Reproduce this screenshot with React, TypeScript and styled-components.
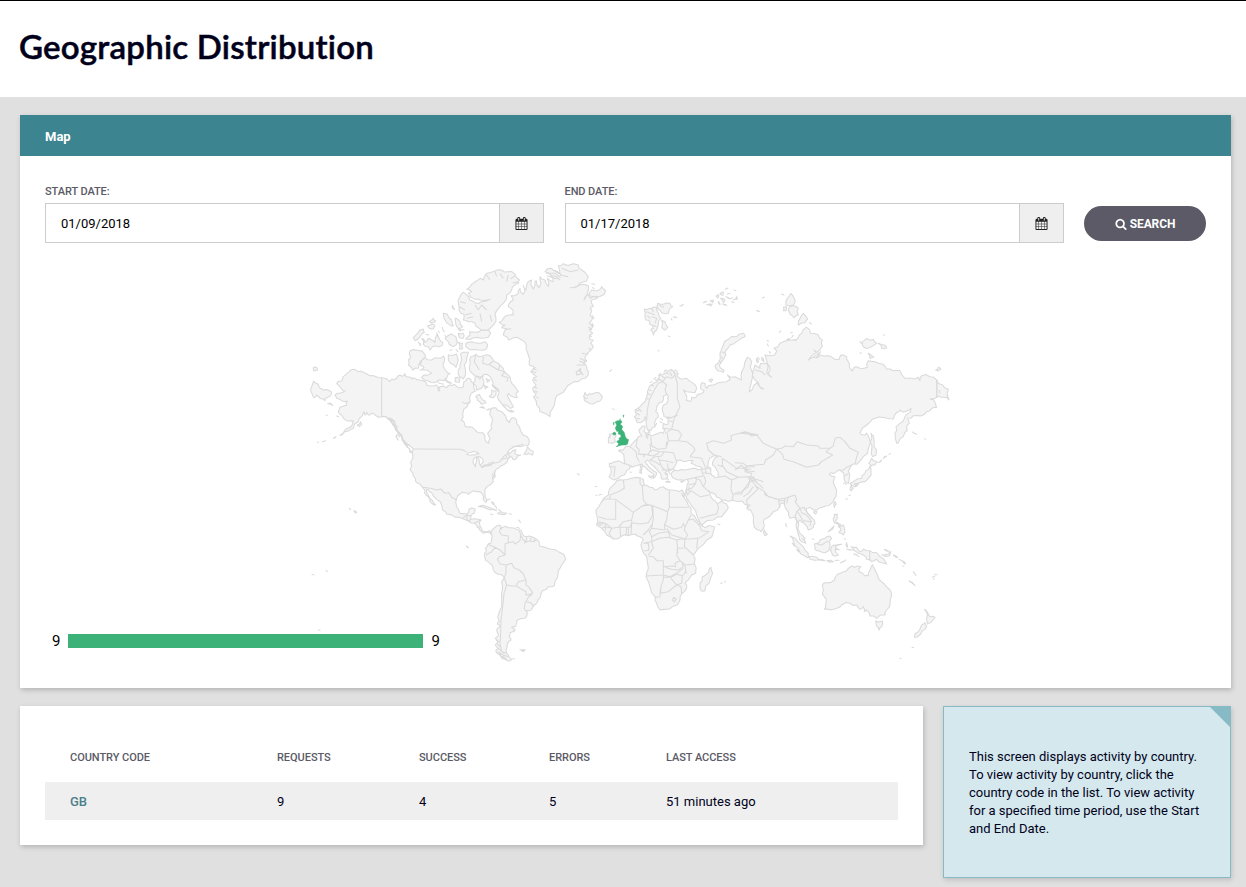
import React from 'react';
import styled, { createGlobalStyle, css } from 'styled-components';

const GlobalStyle = createGlobalStyle`
  * { box-sizing: border-box; }
  body {
    margin: 0;
    background: #e0e0e0;
    color: #00001a;
    font-family: Roboto, 'Liberation Sans', sans-serif;
    font-size: 13px;
  }
`;

const Page = styled.div`
  min-height: 887px;
  overflow: hidden;
`;

const PageHeader = styled.header`
  height: 97px;
  border-top: 1px solid #000;
  background: #fff;
  padding: 25px 19px 0;
`;

const Title = styled.h1`
  margin: 0;
  font-family: Lato, 'Liberation Sans', sans-serif;
  font-weight: 600;
  font-size: 33px;
  line-height: 40px;
  letter-spacing: 0.23px;
  white-space: nowrap;
  -webkit-text-stroke: 0.5px #00001a;
`;

const Content = styled.main`
  padding: 18px 15px 9px 20px;
  display: flex;
  flex-direction: column;
  gap: 18px;
`;

const panel = css`
  background: #fff;
  box-shadow: 1px 2px 5px rgba(0, 0, 0, 0.2);
`;

const MapPanel = styled.section`
  ${panel}
`;

const PanelHeader = styled.h2`
  margin: 0;
  height: 41px;
  line-height: 43px;
  padding: 0 25px;
  background: #3b8490;
  color: #fff;
  font-size: 13px;
  font-weight: 700;
`;

const PanelBody = styled.div`
  padding: 29px 25px 20px;
`;

const Filters = styled.form`
  display: grid;
  grid-template-columns: 499px 499px 122px;
  justify-content: space-between;
  align-items: end;
`;

const Field = styled.label`
  display: flex;
  flex-direction: column;
  gap: 4px;
`;

const FieldLabel = styled.span`
  color: #5b5a66;
  font-size: 11px;
  font-weight: 500;
  line-height: 14px;
  letter-spacing: -0.08px;
`;

const DateBox = styled.span`
  display: flex;
  height: 40px;
  border: 1px solid #ccc;
`;

const DateInput = styled.input`
  flex: 1;
  min-width: 0;
  border: 0;
  outline: 0;
  padding: 0 15px;
  background: #fff;
  color: #000;
  font: 13px Roboto, 'Liberation Sans', sans-serif;
`;

const CalendarButton = styled.span`
  width: 44px;
  display: flex;
  align-items: center;
  justify-content: center;
  border-left: 1px solid #ccc;
  background: #efefef;
  color: #222;
`;

const SearchButton = styled.button`
  height: 35px;
  margin: 0 0 2px;
  padding: 0;
  display: flex;
  align-items: center;
  justify-content: center;
  gap: 3px;
  border: 0;
  border-radius: 18px;
  background: #5b5a66;
  color: #fff;
  font: 700 12px Roboto, 'Liberation Sans', sans-serif;
  letter-spacing: -0.1px;
`;

const MapFrame = styled.div`
  position: relative;
  margin-top: 12px;
  height: 413px;
`;

const MapSvg = styled.svg`
  display: block;
  width: 100%;
  height: 100%;
`;

const Legend = styled.div`
  position: absolute;
  left: 7px;
  bottom: 18px;
  display: flex;
  align-items: center;
  gap: 8px;
  color: #000;
  font-size: 15px;
  line-height: 18px;
`;

const LegendBar = styled.div`
  width: 355px;
  height: 14px;
  background: #3cb178;
`;

const BottomRow = styled.div`
  display: grid;
  grid-template-columns: 903px 1fr;
  gap: 20px;
  align-items: start;
`;

const TablePanel = styled.section`
  ${panel}
  padding: 25px;
  height: 139px;
`;

const Table = styled.table`
  width: 100%;
  table-layout: fixed;
  border-collapse: collapse;
`;

const HeadCell = styled.th<{ $width?: number }>`
  width: ${p => (p.$width ? p.$width + 'px' : 'auto')};
  height: 51px;
  padding: 2px 0 0 25px;
  text-align: left;
  font-size: 11px;
  font-weight: 500;
  letter-spacing: -0.05px;
  color: #5b5a66;
`;

const Cell = styled.td<{ $link?: boolean }>`
  height: 38px;
  padding: 0 0 0 25px;
  background: #efefef;
  color: ${p => (p.$link ? '#4b7f8c' : '#00001a')};
  font-weight: ${p => (p.$link ? 500 : 400)};
`;

const InfoPanel = styled.aside`
  position: relative;
  height: 172px;
  padding: 41px 25px 0;
  border: 1px solid #86bac5;
  background: #d5e8ed;
  box-shadow: 1px 2px 5px rgba(0, 0, 0, 0.15);
  line-height: 18px;

  &::after {
    content: '';
    position: absolute;
    top: -1px;
    right: -1px;
    border-top: 22px solid #86bac5;
    border-left: 22px solid transparent;
  }
`;

const CALENDAR =
  'M192 1664h288v-288h-288v288zm352 0h320v-288h-320v288zm-352-352h288v-320h-288v320zm352 0h320v-320h-320v320zm-352-384h288v-288h-288v288zm736 736h320v-288h-320v288zm-384-736h320v-288h-320v288zm768 736h288v-288h-288v288zm-384-352h320v-320h-320v320zm-352-864v-288q0-13-9.5-22.5t-22.5-9.5h-64q-13 0-22.5 9.5t-9.5 22.5v288q0 13 9.5 22.5t22.5 9.5h64q13 0 22.5-9.5t9.5-22.5zm736 864h288v-320h-288v320zm-384-384h320v-288h-320v288zm384 0h288v-288h-288v288zm32-480v-288q0-13-9.5-22.5t-22.5-9.5h-64q-13 0-22.5 9.5t-9.5 22.5v288q0 13 9.5 22.5t22.5 9.5h64q13 0 22.5-9.5t9.5-22.5zm384-64v1280q0 52-38 90t-90 38h-1408q-52 0-90-38t-38-90v-1280q0-52 38-90t90-38h128v-96q0-66 47-113t113-47h64q66 0 113 47t47 113v96h384v-96q0-66 47-113t113-47h64q66 0 113 47t47 113v96h128q52 0 90 38t38 90z';
const MAGNIFIER =
  'M1216 832q0-185-131.5-316.5t-316.5-131.5-316.5 131.5-131.5 316.5 131.5 316.5 316.5 131.5 316.5-131.5 131.5-316.5zm512 832q0 52-38 90t-90 38q-54 0-90-38l-343-342q-179 124-399 124-143 0-273.5-55.5t-225-150-150-225-55.5-273.5 55.5-273.5 150-225 225-150 273.5-55.5 273.5 55.5 225 150 150 225 55.5 273.5q0 220-124 399l343 343q37 37 37 90z';

const Icon = ({ d, size }: { d: string; size: number }) => (
  <svg width={size} height={size} viewBox="0 0 1792 1792" fill="currentColor" aria-hidden>
    <path d={d} />
  </svg>
);

/* Map sheets: each has its own origin and is drawn at three units per pixel.
   Shapes are "x,y x,y ..." point lists, separated by "|". */
type Sheet = { x: number; y: number; land: string; water?: string; borders?: string; highlight?: string };

const sheets: Sheet[] = [
  {
    // North American mainland, Alaska and the western Arctic islands
    x: 300,
    y: 255,
    land:
      '163,343 175,350 190,352 210,362 225,364 245,368 270,380 275,372 290,370 300,360 310,363 315,356 320,366 333,367 335,372 345,370 350,374 362,376 375,380 380,390 395,393 410,390 415,408 420,395 440,398 450,390 463,388 475,398 490,395 492,380 500,372 512,372 520,385 522,400 526,408 508,430 510,443 502,455 488,478 484,495 495,513 510,515 525,525 548,533 555,555 567,565 570,550 563,535 575,520 577,500 570,480 575,460 588,458 600,468 610,475 620,495 628,503 637,488 645,490 650,505 660,520 665,533 682,545 688,560 685,570 670,572 650,574 636,580 622,592 632,594 648,584 645,596 662,600 648,612 638,612 632,604 625,610 610,630 595,640 585,650 578,665 580,680 570,690 555,703 555,720 560,733 558,742 550,733 545,715 530,710 510,713 505,718 495,713 480,717 470,730 470,755 480,775 500,777 507,763 525,762 522,775 513,783 513,793 535,793 543,795 540,813 545,823 555,830 568,827 573,832 573,838 562,832 550,835 540,827 532,817 522,805 505,798 485,790 465,787 440,777 428,765 425,750 410,733 395,713 385,705 380,702 385,720 398,737 407,750 398,747 388,730 378,720 375,705 368,697 360,687 347,680 340,663 330,645 332,620 338,595 340,582 328,572 315,560 305,540 290,525 285,505 275,495 258,485 245,485 225,480 215,475 205,480 200,472 195,480 192,470 185,485 175,500 160,520 145,528 130,533 150,517 160,498 145,498 130,490 125,480 115,470 120,457 140,450 142,438 125,437 110,430 105,420 120,415 135,408 125,402 110,385 125,378 130,365 148,350' +
      '|41,378 55,388 60,400 70,405 88,407 95,415 80,428 75,437 60,430 50,420 41,428|83,446 98,452 90,444|40,338 50,337 53,345 42,348' +
      '|330,288 352,286 377,302 362,318 355,340 338,345 325,330 325,315 332,305' +
      '|375,308 395,315 420,310 430,303 433,320 430,335 440,350 450,355 440,370 432,378 415,375 400,383 385,378 365,368 372,360 395,355 360,345 372,338 360,330 365,318' +
      '|340,248 355,232 370,222 373,232 360,245 345,257|365,250 375,262 385,250 395,255 405,262 410,240 420,255 428,262 425,272 405,272 390,285 385,275 370,268' +
      '|388,200 400,190 407,198 395,203|382,213 395,207 405,213 400,222 388,220|430,175 442,178 455,195 460,212 447,208 435,195|465,190 480,200 488,215 478,222 468,210' +
      '|457,152 463,163 459,160|427,217 433,230 429,225|435,250 448,240 455,237 468,245 472,262 460,275 448,268|475,235 490,235 490,250 478,248|475,262 488,265 488,280 478,282' +
      '|445,300 470,297 475,315 468,337 452,325|482,295 505,292 500,310 493,330 497,355 490,372 478,365 475,345 480,330|465,368 480,370 478,382 465,380|435,370 455,385 440,380' +
      '|355,262 362,268 360,272|378,238 386,240|410,234 414,242|435,242 440,246|450,286 456,284|468,284 474,290|415,228 418,232|446,262 452,270|475,222 492,224 480,228' +
      '|172,510 182,500 185,508 178,515|120,540 130,533 124,541|100,550 108,545|68,560 76,557|52,562 56,561|79,480 82,482|110,483 116,485' +
      '|318,573 328,580 338,594 330,592|268,488 276,502 272,500|270,490 284,500 280,512|276,505 292,515 286,522|285,515 292,530 287,526|290,540 295,556 288,545|294,530 304,540 298,545|305,545 312,560 306,556|310,560 322,572 314,568|682,575 700,590 698,600 685,595 672,597 680,585' +
      '|148,760 152,764|162,766 170,772 166,774|500,873 504,878|36,958 42,960|78,946 82,950|832,656 838,660|56,1124 60,1126',
    borders: '245,368 245,485 258,485 275,500 290,525 300,535 312,562 328,572|340,582 482,583 500,590|412,378 418,385 432,388|486,442 500,446 508,440|415,395 420,410',
  },
  {
    // Greenland, Iceland, Ellesmere and Baffin
    x: 440,
    y: 255,
    land:
      '80,103 95,88 105,80 120,70 130,75 140,55 165,48 185,45 205,50 225,58 238,75 235,85 222,92 215,105 200,120 190,145 175,160 165,175 168,190 160,210 148,222 130,225 115,218 105,205 85,200 70,195 72,178 57,165 55,145 60,125 70,112 78,118 90,135 105,143 125,140 150,133 120,135 105,133 90,125 85,115 95,110' +
      '|77,252 90,240 88,230 110,232 125,226 145,225 152,235 145,247 125,250 100,248|78,265 95,260 115,265 135,260 143,270 138,283 115,285 90,284 80,278' +
      '|90,320 92,305 108,298 120,305 130,302 150,302 160,315 175,325 190,340 205,360 212,378 225,395 235,410 228,418 232,428 218,425 205,415 202,422 212,440 220,455 210,460 195,450 180,440 172,425 178,410 165,400 158,380 150,365 135,358 125,365 105,362 92,350 88,335' +
      '|105,365 120,372 130,362 132,380 125,400 110,405 100,385|107,425 118,418 128,435 138,443 125,448 112,435|148,425 155,405 168,408 160,428|120,457 135,460 128,455|140,465 152,462|188,452 205,468 222,470 200,462|138,370 150,375 142,382|132,390 144,396 136,402|156,390 176,405 164,400' +
      '|178,202 190,190 208,180 220,180 220,168 205,155 208,145 220,135 213,122 235,115 240,100 250,118 250,92 258,105 262,84 275,75 280,102 285,78 290,78 297,98 303,85 300,65 315,75 325,95 322,70 340,80 330,58 315,50 335,40 350,48 360,55 355,32 370,26 400,26 415,30 425,45 445,65 440,78 420,85 390,98 410,95 432,88 445,92 442,115 432,135 445,118 450,130 478,125 455,135 455,145 460,155 450,160 455,165 450,180 458,190 448,205 458,215 448,222 458,235 448,250 460,255 452,265 460,275 448,290 440,300 435,308 440,318 430,325 440,335 445,350 435,370 415,380 390,388 378,400 370,412 350,422 345,440 335,465 330,485 320,478 300,470 290,450 280,425 288,415 278,400 288,390 278,375 290,365 272,350 285,338 268,330 270,310 265,300 258,280 255,262 240,252 220,248 205,255 200,245 190,240 195,225 213,222 185,218 195,210' +
      '|448,122 455,105 470,107 485,95 497,107 478,125|430,425 435,412 442,422 448,416 455,418 475,412 487,425 480,438 460,447 440,440 432,432 442,430|456,86 464,88|458,97 462,101|458,182 462,190|456,205 461,213|506,548 510,540|36,152 43,163' +
      '|408,350 422,340 425,355 410,360',
    borders:
      '105,150 115,165 125,150 140,165|120,175 125,200|150,180 155,200|180,55 190,70|140,60 150,75|205,60 200,80|60,140 78,145|58,155 75,165|75,180 95,175|80,190 100,185|225,62 212,72|236,80 218,84|165,50 170,64|107,300 103,320 118,345|130,305 128,325 145,330 160,318|150,330 175,345 180,330|175,345 195,350 185,362 205,368 200,380|330,60 350,65 360,75|340,45 365,60|318,55 345,55 362,68|320,62 352,72|365,40 390,50 415,45|385,65 360,60|278,340 290,345|275,348 288,354|282,372 290,378|280,395 292,400|284,408 294,412|288,425 296,430|420,310 440,320|410,330 435,330|415,345 430,360|425,295 445,298|418,318 432,324|445,215 456,225|448,240 455,246|445,280 455,284',
  },
  {
    // South America, the Caribbean and the Great Lakes
    x: 400,
    y: 440,
    land:
      '273,280 285,262 300,256 303,268 312,260 325,263 345,265 362,270 368,282 380,290 395,290 410,298 418,318 435,322 455,328 475,335 493,345 497,357 485,375 475,392 473,412 463,437 445,440 428,452 422,470 410,490 395,508 385,512 375,510 382,522 375,535 352,540 350,550 345,560 335,562 345,568 330,578 328,590 333,600 322,612 318,630 325,645 335,658 325,663 305,655 292,640 288,630 295,625 286,615 294,605 286,595 296,585 290,570 300,560 292,552 298,545 298,515 305,480 308,440 313,412 295,403 280,390 268,368 253,345 258,335 256,325 263,315 272,310 275,295' +
      '|235,200 250,196 270,203 290,212 270,210 250,202|293,220 302,214 320,219 312,224 297,222|327,221 334,223|272,222 279,224|262,180 270,177|275,185 283,195|285,198 290,206|350,262 358,265|341,575 345,572|360,628 366,633|367,628 376,629 370,635|338,656 344,657|356,240 361,248|296,208 300,212|200,320 205,323',
    water: '200,43 215,37 225,35 237,42 225,45 213,46|222,55 230,50 230,65 226,80 221,72|232,50 242,52 250,60 247,70 240,75 238,62|245,82 255,76 262,78 280,66 270,68 255,74',
    borders:
      '240,75 246,82 280,70 300,65 312,48 325,40 330,55|68,142 92,145 110,150 122,147 135,160 147,158 155,172 170,180|188,235 200,225 213,228|202,225 200,238 205,243|213,238 205,243|222,250 243,240|232,262 242,260|303,262 298,275 305,285 325,288 325,308 315,312 315,345|263,313 285,322 275,335 258,345|285,322 300,330 315,345 298,350 292,358 300,372 318,375|318,375 335,370 342,383 358,390 370,402 378,420|318,375 318,400 313,412|313,412 320,435 335,438 348,438 355,425 378,420|350,438 365,448 378,455 378,465 390,463 398,458 385,440 378,435 378,420|390,463 375,490 373,508|398,458 390,470|380,485 392,488 402,500|320,435 312,460 308,500 303,540 302,580 300,610 305,635 320,640|325,308 340,305 345,312 360,302 362,285 358,272|362,285 370,300 380,308|380,292 378,305|395,290 390,303 378,305 372,310|403,295 402,305 390,303|410,298 402,305|292,635 310,645 325,650|290,610 300,620|292,622 302,632 312,640|298,640 304,650 316,655|308,648 320,658|288,600 298,606|282,95 286,108 280,118|277,100 282,112|318,45 322,58|300,60 318,55|335,22 352,18 370,12',
  },
  {
    // Eurasian mainland and the European Arctic
    x: 590,
    y: 270,
    land:
      '58,580 70,577 105,582 102,560 95,548 85,542 100,540 105,532 120,530 128,520 135,512 145,500 155,498 150,490 148,478 155,470 165,468 162,485 170,495 185,497 205,490 220,490 225,480 218,475 220,460 235,462 235,450 230,443 250,440 262,436 222,440 218,425 220,405 235,390 235,378 230,372 220,378 218,395 200,410 197,425 205,440 195,455 195,470 182,482 173,480 168,455 165,440 152,458 140,455 133,440 140,432 135,420 150,410 165,395 172,375 178,350 190,340 205,325 220,313 235,302 250,303 265,310 262,320 290,325 310,340 320,355 315,368 290,365 280,360 290,378 290,392 300,395 305,382 320,380 325,372 335,370 342,362 332,355 335,338 345,340 350,355 365,345 380,340 410,335 420,330 412,315 435,320 455,330 455,305 465,275 472,262 485,275 488,310 482,345 478,366 492,345 500,338 510,352 521,357 508,348 505,338 495,330 490,300 495,285 510,295 512,280 525,280 535,285 540,300 535,310 545,322 530,310 528,265 525,255 555,255 560,245 552,235 570,220 590,212 615,210 625,203 635,190 648,172 662,190 685,195 697,210 697,230 690,240 675,250 655,270 675,262 685,262 690,255 715,257 730,265 748,268 753,255 770,260 775,275 778,290 788,303 797,290 810,295 832,292 835,272 855,275 880,283 890,297 910,302 930,302 945,325 965,325 985,322 990,332 995,317 1020,320 1040,330 1058,345 1075,358 1077,390 1062,382 1045,378 1020,387 1030,388 1040,412 1025,415 1010,425 992,438 970,437 953,445 958,460 950,470 952,480 940,500 925,518 920,520 915,490 918,470 930,460 945,440 955,430 963,415 945,425 930,420 920,427 910,447 885,443 847,448 830,465 810,488 820,495 830,490 838,505 835,535 820,560 800,583 790,582 780,595 775,605 778,625 775,640 765,635 762,615 755,605 750,600 740,605 735,608 723,608 718,613 735,620 730,635 733,645 740,660 738,680 730,695 715,707 697,712 680,720 660,712 650,715 653,730 667,745 675,760 670,772 655,780 652,770 640,758 630,750 625,755 623,775 630,790 645,805 647,820 635,815 627,798 622,780 618,765 617,742 600,745 595,725 585,710 583,702 573,700 568,712 550,725 540,738 523,748 523,765 513,785 503,780 490,755 482,720 470,715 480,705 463,702 455,693 435,693 425,692 403,690 393,688 380,682 365,668 357,662 360,673 370,690 380,700 395,693 400,698 415,713 407,725 395,740 370,750 335,765 330,758 320,735 307,710 290,685 283,675 288,660 291,645 293,628 275,630 265,630 250,625 243,615 247,605 265,602 285,600 310,595 325,600 337,598 320,588 303,580 310,572 295,572 280,575 270,570 260,575 255,588 250,595 243,600 230,602 225,610 233,615 228,627 217,628 213,615 205,605 197,595 185,585 173,570 165,575 173,585 185,598 200,608 197,618 190,625 192,613 175,602 163,590 150,582 135,588 120,590 110,602 103,615 85,625 73,630 63,625 57,620 63,595' +
      '|68,490 70,488 78,497 76,515 55,518 55,505 62,500 58,492' +
      '|163,118 180,115 190,125 185,115 200,112 205,130 212,145 205,155 200,180 190,195 182,180 190,175 178,162 180,155 168,150 165,135|203,100 220,103 240,100 248,110 235,130 215,128 205,118|215,150 225,155 233,172 225,180 215,172|270,108 280,103|250,142 260,143|235,198 240,200|205,241 207,243|59,304 65,299|68,416 72,419|243,146 246,150' +
      '|375,290 385,280 390,250 400,225 415,208 440,200 460,190 465,200 440,215 420,225 405,245 402,265 388,285 402,300 400,307 385,303' +
      '|340,98 350,94|350,104 362,108 366,103|360,92 370,90 368,98|378,78 386,74 384,84|390,70 400,66 398,76|392,85 405,90 400,98|408,80 420,86 428,84|406,58 414,54|412,72 420,70|430,90 440,80 442,88|425,95 432,98|398,102 410,106|432,60 438,62|385,95 390,104|500,122 507,124|357,330 368,328 364,336' +
      '|172,505 168,490 175,488|175,482 180,490|503,262 508,268|212,445 218,450|210,455 216,458|180,338 186,334|192,328 198,322|206,316 212,310|222,306 230,300|240,300 246,298|254,300 262,304|196,468 200,460|228,608 232,612|236,605 240,612|230,625 236,630',
    borders:
      '170,452 172,420 178,390 190,365 205,340 218,335 230,345 225,360 230,372|205,325 218,335 230,320 245,325 255,315|255,315 262,340 262,385 270,410 255,440|235,452 250,455|220,475 245,478 250,455 255,440|225,490 245,478 265,482 275,495 265,512 235,512 232,490|235,512 230,530|265,512 290,515 310,530 315,540 300,560|182,500 185,528 205,538 228,535 230,515|142,505 138,530 148,540 145,553 175,553 182,540 180,520|120,530 138,545 140,560 148,575|102,580 125,588|62,590 75,590 72,620|178,545 190,540 208,545 222,545|172,555 190,558 205,550 208,545|195,560 215,558 222,545|205,570 225,572|222,545 250,548 260,575|225,572 250,578|232,580 235,598 255,598|205,562 215,590 225,600|148,553 165,555 160,562|195,560 180,570 195,575 210,585|215,600 240,600|195,330 210,330|180,345 192,348|175,358 184,362|172,370 182,374|168,385 176,388|215,318 224,324|230,308 238,314|240,305 245,318|250,306 256,314|140,430 150,435|145,415 155,425|136,424 148,420|140,445 150,446|168,125 182,130 195,135|185,140 200,145 195,160|188,165 200,170|208,106 222,112|172,138 182,145|395,560 372,555 355,540 350,520 370,512 400,520 425,510 422,497 465,485 480,490 505,495 450,490 470,487 485,498 500,495 520,520 542,530 560,537|300,560 335,565|335,565 345,590 365,595|395,245 404,250|392,260 400,266|388,272 394,278',
    water: '355,575 370,558 383,560 370,572 368,585 380,600 385,620 375,623 365,615 363,600 353,588',
    highlight:
      '75,456 82,452 92,450 96,457 90,463 98,470 95,478 103,488 106,500 110,506 116,509 113,522 98,525 88,527 78,530 86,521 80,515 88,509 87,504 93,502 92,494 85,492 85,484 80,484 76,474 80,466|68,490 74,486 78,490 76,495 69,494|99,436 102,436 100,442|88,448 92,447|70,458 73,457 71,465',
  },
  {
    // Siberian islands and the Mongolian frontier
    x: 740,
    y: 270,
    land:
      '138,105 142,85 153,70 165,90 160,105|148,112 160,107 175,115 175,135 162,143 150,132 145,122|130,112 140,110 138,122 130,122|175,165 180,145 190,130 203,148 195,158|208,158 214,162|125,72 132,75|67,84 73,81|54,122 58,125|82,211 85,214|82,222 85,228|118,187 122,183|152,188 157,187|155,202 160,196' +
      '|367,215 380,205 390,210 400,208 410,220 395,230 385,235 370,230|415,220 435,226 440,233 425,235|385,250 402,262 390,265|360,215 364,220|430,194 433,196|360,248 364,250|587,300 595,292 603,298 595,303|393,490 400,497 402,530 408,555 398,560 395,540 391,515|518,486 522,490|524,490 530,493|554,506 557,508|50,265 56,275 52,278|65,262 72,275 66,270|88,245 92,250|140,210 150,206|162,208 168,212|222,240 230,248',
    borders:
      '591,330 591,384|590,332 590,382|110,537 125,535 135,528 160,530 172,515 200,525 235,528 240,535 270,535 280,528 285,505 300,502 315,515 330,535 355,547 350,560 345,583|110,537 128,553 132,568 160,575 200,592 235,585 245,575 278,555 258,545 270,535|305,603 320,592 335,585|313,617 325,612|45,300 65,305 75,315|597,360 600,370|218,262 238,248|228,265 242,245',
  },
  {
    // Africa and the Middle East
    x: 585,
    y: 440,
    land:
      '95,122 115,120 140,115 165,113 175,118 178,135 195,142 210,150 225,142 235,140 250,150 275,152 292,150 300,162 298,172 290,160 298,175 310,195 318,220 335,240 345,258 360,263 388,260 385,275 365,300 340,325 325,345 328,370 332,400 310,420 300,430 305,445 292,460 285,480 262,500 245,508 225,510 215,490 210,470 195,440 183,410 190,385 185,350 170,325 168,315 175,300 165,290 150,282 130,287 110,288 85,297 65,285 50,265 35,255 35,225 33,210 50,185 55,175 70,165 75,145 90,130' +
      '|378,382 383,400 372,430 360,452 348,452 345,430 352,410 365,402 372,390|166,75 171,72 170,85 166,82|165,88 171,88 170,100 164,98|190,107 203,107 200,115|242,125 256,126|287,124 297,123 290,127|30,139 35,140|32,166 36,166|42,165 50,163|399,252 405,254|407,430 412,429|418,425 422,426|135,96 139,97',
    borders:
      '48,187 58,177 75,177 75,165 100,155 118,145 115,120|75,177 92,178 145,217 172,198 185,193 175,180 172,140 165,130 165,113|172,140 178,132|92,182 92,238 62,237 40,230|145,217 140,240 115,245 100,262 80,265 62,250|172,198 200,195 203,225 190,248 165,252 140,248 140,240|185,193 203,197 248,215|253,150 253,202 312,202|248,215 253,202|203,197 205,235 200,265 240,270 238,255 245,240 248,215|240,255 265,268 290,262 295,250 300,262 310,240 318,225|140,248 138,285|203,250 190,270 175,285|200,265 193,275 200,290 200,305 180,308|200,290 220,280 250,275 255,292|245,265 260,285 300,297 308,285 298,270 300,262|310,240 325,238 345,258|345,260 350,272 372,275 345,293 320,297 300,297|300,297 298,320 325,345|335,325 338,295|200,305 222,295 250,292 275,300 278,325 275,345 285,362 270,370 272,380 262,378 235,380 235,362 215,362 205,350 190,348|200,305 205,325 190,345|275,325 298,325|275,300 290,297 300,297|285,362 300,375 330,372|235,380 235,405 183,408|240,382 260,388 280,390 295,380 290,365|235,405 255,410 275,400 295,385|235,408 235,418 228,440 225,470 210,472|235,412 260,412|228,440 225,460 250,455 275,435 258,415|258,412 275,402 292,408 290,430 275,435|300,375 302,395 292,408|302,395 306,400|275,435 288,440 290,460|262,480 267,472 274,478 268,486 262,480|40,245 60,250 62,270|50,265 62,260 80,265 72,282 85,297|105,262 107,290|125,262 123,288|100,262 135,262 140,248|130,262 130,287|37,250 55,252|37,255 50,256|175,310 190,310 192,330 178,333|275,330 280,338' +
      '|303,150 320,145 332,130|330,115 345,120 355,140 372,155|303,150 308,165 318,152 345,170 372,165|345,235 370,228 395,222 400,205 398,192|308,118 335,112 355,108 350,90|310,135 332,130 335,112|352,88 368,85|355,98 378,102|360,88 365,100|358,108 362,125 355,140|400,112 420,108 440,120 438,150 445,165 440,182|440,120 460,112 490,110 495,125 475,150 470,162 443,162|398,75 415,80 425,95 460,112|412,55 412,80|412,55 435,70 455,85 475,85 490,92|475,85 485,80 510,80|480,92 510,95|490,110 510,112|495,125 510,118|475,170 490,160 505,140|312,140 312,155',
  },
  {
    // South and East Asia, Oceania
    x: 735,
    y: 430,
    land:
      '410,85 425,95 420,105 408,108 402,100|405,108 408,125 400,145 390,155 370,160 360,170 350,165 345,160 365,148 380,145 390,130 400,118|348,165 355,175 350,183 345,175|358,162 368,160 364,168|428,98 440,90|445,85 455,78|462,73 466,70|333,208 337,206|342,197 346,195' +
      '|300,215 304,222 298,232 296,222|238,242 246,245 242,252 236,248|88,300 97,313 90,317 85,308|298,253 307,252 307,265 302,275 312,285 300,280 295,265|310,290 325,285 330,305 325,315 312,308 318,300|308,278 318,284 312,290|280,305 297,288|153,280 155,290' +
      '|165,318 180,325 205,350 220,370 222,382 210,378 190,355 175,335|220,380 245,382 270,392 250,390 225,388|275,392 295,395|300,392 312,391|316,398 332,390|232,327 236,328|238,342 250,340 270,325 282,318 290,325 283,335 285,350 272,368 250,362 240,358|290,350 300,345 320,343 300,352 312,360 300,358 310,375 298,378 290,368|335,338 338,352 334,348|335,358 352,360|356,372 372,380|172,340 178,348|185,358 192,366|328,326 331,328' +
      '|348,350 365,352 375,365 385,357 405,362 425,368 435,380 455,402 440,398 425,388 410,395 395,388 385,375 370,370 355,360|440,375 460,372 467,365 462,378|448,358 462,364|475,375 488,383|493,388 500,392|502,393 512,402|503,408 507,409|535,425 538,430|539,430 543,436|522,453 540,467|592,442 600,438|600,433 606,434|595,448 598,446' +
      '|262,465 275,458 298,450 308,432 325,425 335,422 350,408 368,408 378,410 372,425 390,438 400,438 405,420 412,404 425,430 430,445 448,462 465,480 470,495 465,520 455,540 450,555 425,565 405,558 395,540 388,545 385,530 375,538 365,525 345,520 320,525 305,535 285,540 268,538 272,525 262,492|422,573 442,573 440,590 432,600 425,588' +
      '|568,538 580,552 585,560 600,562 590,575 578,582 575,568 578,555|570,578 575,588 560,605 550,618 538,622 540,612 555,598 562,583|531,652 536,653|495,685 498,686|326,160 333,163',
    borders:
      '125,57 115,75 92,90 87,103 60,105 35,108 25,100 0,98|35,108 30,125 50,130 45,145 60,165 65,170 88,185 100,200 130,208 150,205 180,195 185,210 180,215 195,235 210,232|20,105 30,118 48,118|48,145 70,150 85,155|55,150 80,170|50,140 68,160 85,175|88,185 90,195 125,208|130,208 135,232|150,205 148,225|160,200 155,220|130,212 148,212|45,145 40,170 20,185 0,190|60,165 68,178 45,200 35,210 38,235|20,105 0,120|195,235 185,245 180,262 188,280|195,235 200,248 215,255 230,275|205,232 215,245 232,265|188,245 200,265 205,275|205,272 228,275 225,288|200,325 208,330|245,342 260,345 275,335 283,335|404,362 404,392',
  },
];

/* Breaks long straight runs into a slightly irregular coastline. */
const coast = (points: number[][]): string =>
  points
    .map(([x, y], i) => {
      const [nx, ny] = points[(i + 1) % points.length];
      const dx = nx - x;
      const dy = ny - y;
      const length = Math.hypot(dx, dy);
      if (length < 9 || length > 60) return `${x},${y}`;
      const bend = (((x * 31 + y * 17) % 11) / 10 - 0.5) * 0.38;
      return `${x},${y} ${(x + dx * 0.45 - dy * bend).toFixed(1)},${(y + dy * 0.45 + dx * bend).toFixed(1)}`;
    })
    .join(' ');

const toPath = (shapes: string, closed: boolean): string =>
  shapes
    .split('|')
    .map(shape => {
      const points = shape.split(' ').map(p => p.split(',').map(Number));
      return closed ? `M${coast(points)}Z` : `M${shape}`;
    })
    .join('');

const WorldMap = () => (
  <MapSvg viewBox="45 255 1161 413" role="img" aria-label="Requests by country">
    {sheets.map((s, i) => (
      <g key={i} transform={`translate(${s.x} ${s.y}) scale(${1 / 3})`} stroke="#dadada" strokeWidth="3.2" strokeLinejoin="round">
        <path d={toPath(s.land, true)} fill="#f4f4f4" />
        {s.water && <path d={toPath(s.water, true)} fill="#fff" />}
        {s.borders && <path d={toPath(s.borders, false)} fill="none" />}
        {s.highlight && <path d={toPath(s.highlight, true)} fill="#3cb178" stroke="#3cb178" strokeWidth="1.5" />}
      </g>
    ))}
  </MapSvg>
);

const DateField = ({ label, value }: { label: string; value: string }) => (
  <Field>
    <FieldLabel>{label}</FieldLabel>
    <DateBox>
      <DateInput type="text" defaultValue={value} />
      <CalendarButton>
        <Icon d={CALENDAR} size={13} />
      </CalendarButton>
    </DateBox>
  </Field>
);

const columns: [string, number?][] = [
  ['COUNTRY CODE', 207],
  ['REQUESTS', 142],
  ['SUCCESS', 130],
  ['ERRORS', 117],
  ['LAST ACCESS'],
];
const row = ['GB', '9', '4', '5', '51 minutes ago'];

export default function App() {
  return (
    <Page>
      <GlobalStyle />
      <PageHeader>
        <Title>Geographic Distribution</Title>
      </PageHeader>
      <Content>
        <MapPanel>
          <PanelHeader>Map</PanelHeader>
          <PanelBody>
            <Filters>
              <DateField label="START DATE:" value="01/09/2018" />
              <DateField label="END DATE:" value="01/17/2018" />
              <SearchButton type="button">
                <Icon d={MAGNIFIER} size={12} />
                SEARCH
              </SearchButton>
            </Filters>
            <MapFrame>
              <WorldMap />
              <Legend>
                <span>9</span>
                <LegendBar />
                <span>9</span>
              </Legend>
            </MapFrame>
          </PanelBody>
        </MapPanel>
        <BottomRow>
          <TablePanel>
            <Table>
              <thead>
                <tr>
                  {columns.map(([name, width]) => (
                    <HeadCell key={name} $width={width}>
                      {name}
                    </HeadCell>
                  ))}
                </tr>
              </thead>
              <tbody>
                <tr>
                  {row.map((value, i) => (
                    <Cell key={i} $link={i === 0}>
                      {value}
                    </Cell>
                  ))}
                </tr>
              </tbody>
            </Table>
          </TablePanel>
          <InfoPanel>
            This screen displays activity by country. To view activity by country, click the country code in the list.
            To view activity for a specified time period, use the Start and End Date.
          </InfoPanel>
        </BottomRow>
      </Content>
    </Page>
  );
}
